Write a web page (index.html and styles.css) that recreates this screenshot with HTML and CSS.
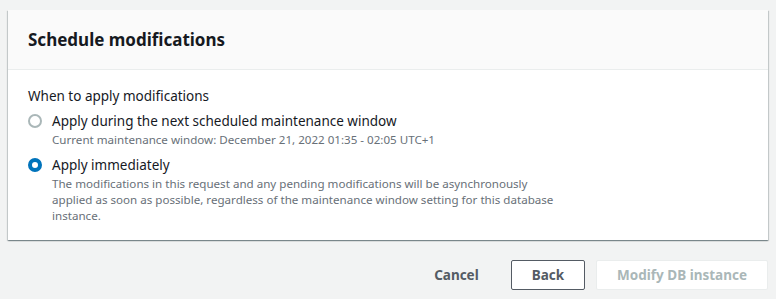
FILE: index.html
```html
<!DOCTYPE html>
<html>
<head>
<meta charset="utf-8">
<link rel="stylesheet" href="styles.css">
</head>
<body>
<div class="page">
  <div class="container">
    <div class="header">
      <h2 class="title">Schedule modifications</h2>
    </div>
    <div class="content">
      <div class="field-label">When to apply modifications</div>
      <div class="radios">
        <label class="radio">
          <span class="dot"></span>
          <span class="radio-text">
            <span class="radio-label">Apply during the next scheduled maintenance window</span>
            <span class="radio-desc">Current maintenance window: December 21, 2022 01:35 - 02:05 UTC+1</span>
          </span>
        </label>
        <label class="radio">
          <span class="dot checked"></span>
          <span class="radio-text">
            <span class="radio-label">Apply immediately</span>
            <span class="radio-desc">The modifications in this request and any pending modifications will be asynchronously applied as soon as possible, regardless of the maintenance window setting for this database instance.</span>
          </span>
        </label>
      </div>
    </div>
  </div>
  <div class="actions">
    <button class="btn btn-link">Cancel</button>
    <button class="btn btn-normal">Back</button>
    <button class="btn btn-disabled">Modify DB instance</button>
  </div>
</div>
</body>
</html>
```
FILE: styles.css
```css
* { box-sizing: border-box; }
html, body { margin: 0; padding: 0; }
body {
  background: #f2f3f3;
  font-family: "Noto Sans", "Open Sans", sans-serif;
  color: #16191f;
  font-size: 13.5px;
  line-height: 22px;
}
.page { padding: 10px 8px 0 8px; }
.container {
  background: #fff;
  box-shadow: 0 1px 1px 0 rgba(0,28,36,.3), 1px 1px 1px 0 rgba(0,28,36,.15), -1px 1px 1px 0 rgba(0,28,36,.15);
}
.header {
  background: #fafafa;
  border-bottom: 1px solid #eaeded;
  padding: 19px 20px 18px;
}
.title {
  margin: 0;
  font-size: 17px;
  line-height: 22px;
  font-weight: 700;
}
.content { padding: 15px 20px 16px; }
.field-label { margin-bottom: 3px; }
.radios { display: flex; flex-direction: column; gap: 6px; }
.radio { display: flex; gap: 10px; align-items: flex-start; }
.dot {
  flex: none;
  width: 14px; height: 14px;
  margin-top: 4px;
  border-radius: 50%;
  border: 2px solid #aab7b8;
  background: #fff;
}
.dot.checked { border: 4px solid #0073bb; }
.radio-text { display: flex; flex-direction: column; }
.radio-label { line-height: 22px; }
.radio-desc {
  font-size: 11.6px;
  line-height: 16px;
  color: #687078;
  max-width: 510px;
}
.actions {
  display: flex;
  justify-content: flex-end;
  align-items: center;
  gap: 11px;
  padding-top: 20px;
}
.btn {
  font-family: inherit;
  font-size: 13.5px;
  font-weight: 700;
  line-height: 22px;
  height: 30px;
  padding: 3px 20px;
  border-radius: 2px;
  background: #fff;
}
.btn-link { border: 1px solid transparent; background: transparent; color: #545b64; }
.btn-normal { border: 1px solid #545b64; color: #545b64; }
.btn-disabled { border: 1px solid #eaeded; color: #aab7b8; }
```
